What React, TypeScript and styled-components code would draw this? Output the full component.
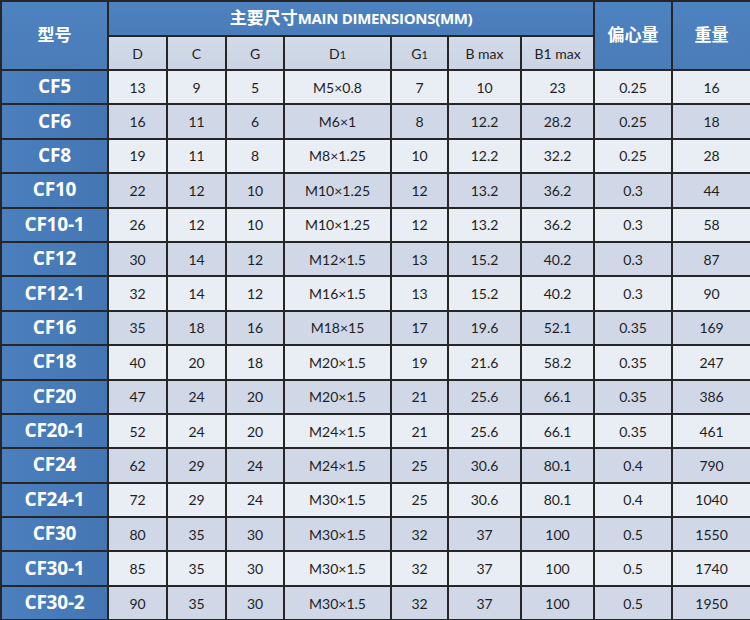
import styled, { createGlobalStyle } from "styled-components"

const GlobalStyle = createGlobalStyle`
  html, body {
    margin: 0;
    padding: 0;
    background: #ffffff;
  }
`

const Table = styled.table`
  width: 750px;
  height: 620px;
  border-collapse: collapse;
  table-layout: fixed;
  font-family: Lato, "Open Sans", "Noto Sans CJK SC", sans-serif;
  color: #1e1e1e;
`

const Row = styled.tr<{ $h: number }>`
  height: ${(p) => p.$h}px;
`

const BlueHead = styled.th`
  border: 2px solid #262626;
  background: linear-gradient(#4d82c0, #4a7cb8);
  color: #ffffff;
  font-family: "Noto Sans CJK SC", sans-serif;
  font-weight: 700;
  font-size: 17px;
  text-align: center;
  vertical-align: middle;
  padding: 0 0 4px;
`

const Latin = styled.span`
  font-family: "Open Sans", sans-serif;
  font-size: 15px;
  font-weight: 700;
  letter-spacing: -0.3px;
`

const SubHead = styled.th`
  border: 2px solid #262626;
  background: linear-gradient(#d3dbe9, #cbd4e4);
  color: #1e1e1e;
  font-weight: 400;
  font-size: 14px;
  text-align: center;
  padding: 0;
`

const Small = styled.span`
  font-size: 11px;
`

const ModelCell = styled.th`
  border: 2px solid #262626;
  background: linear-gradient(90deg, #4b7fbd, #4476b3);
  color: #ffffff;
  font-family: "Open Sans", sans-serif;
  font-weight: 700;
  font-size: 19px;
  letter-spacing: -0.2px;
  text-align: center;
  padding: 0 0 2px;
`

const Cell = styled.td<{ $alt: boolean }>`
  border: 2px solid #262626;
  background: ${(p) => (p.$alt ? "#d0d8e8" : "#e9edf4")};
  font-size: 14px;
  text-align: center;
  padding: 0;
`

const widths = [107, 59, 59, 58, 107, 57, 73, 73, 78, 79]

const rows: string[][] = [
  ["CF5", "13", "9", "5", "M5×0.8", "7", "10", "23", "0.25", "16"],
  ["CF6", "16", "11", "6", "M6×1", "8", "12.2", "28.2", "0.25", "18"],
  ["CF8", "19", "11", "8", "M8×1.25", "10", "12.2", "32.2", "0.25", "28"],
  ["CF10", "22", "12", "10", "M10×1.25", "12", "13.2", "36.2", "0.3", "44"],
  ["CF10-1", "26", "12", "10", "M10×1.25", "12", "13.2", "36.2", "0.3", "58"],
  ["CF12", "30", "14", "12", "M12×1.5", "13", "15.2", "40.2", "0.3", "87"],
  ["CF12-1", "32", "14", "12", "M16×1.5", "13", "15.2", "40.2", "0.3", "90"],
  ["CF16", "35", "18", "16", "M18×15", "17", "19.6", "52.1", "0.35", "169"],
  ["CF18", "40", "20", "18", "M20×1.5", "19", "21.6", "58.2", "0.35", "247"],
  ["CF20", "47", "24", "20", "M20×1.5", "21", "25.6", "66.1", "0.35", "386"],
  ["CF20-1", "52", "24", "20", "M24×1.5", "21", "25.6", "66.1", "0.35", "461"],
  ["CF24", "62", "29", "24", "M24×1.5", "25", "30.6", "80.1", "0.4", "790"],
  ["CF24-1", "72", "29", "24", "M30×1.5", "25", "30.6", "80.1", "0.4", "1040"],
  ["CF30", "80", "35", "30", "M30×1.5", "32", "37", "100", "0.5", "1550"],
  ["CF30-1", "85", "35", "30", "M30×1.5", "32", "37", "100", "0.5", "1740"],
  ["CF30-2", "90", "35", "30", "M30×1.5", "32", "37", "100", "0.5", "1950"],
]

export default function App() {
  return (
    <>
      <GlobalStyle />
      <Table>
        <colgroup>
          {widths.map((w, i) => (
            <col key={i} style={{ width: w }} />
          ))}
        </colgroup>
        <thead>
          <Row $h={35}>
            <BlueHead rowSpan={2}>型号</BlueHead>
            <BlueHead colSpan={7}>
              主要尺寸<Latin>MAIN DIMENSIONS(MM)</Latin>
            </BlueHead>
            <BlueHead rowSpan={2}>偏心量</BlueHead>
            <BlueHead rowSpan={2}>重量</BlueHead>
          </Row>
          <Row $h={34}>
            <SubHead>D</SubHead>
            <SubHead>C</SubHead>
            <SubHead>G</SubHead>
            <SubHead>
              D<Small>1</Small>
            </SubHead>
            <SubHead>
              G<Small>1</Small>
            </SubHead>
            <SubHead>B max</SubHead>
            <SubHead>B1 max</SubHead>
          </Row>
        </thead>
        <tbody>
          {rows.map((r, i) => (
            <Row $h={34.4} key={r[0]}>
              <ModelCell>{r[0]}</ModelCell>
              {r.slice(1).map((v, j) => (
                <Cell $alt={i % 2 === 1} key={j}>
                  {v}
                </Cell>
              ))}
            </Row>
          ))}
        </tbody>
      </Table>
    </>
  )
}
